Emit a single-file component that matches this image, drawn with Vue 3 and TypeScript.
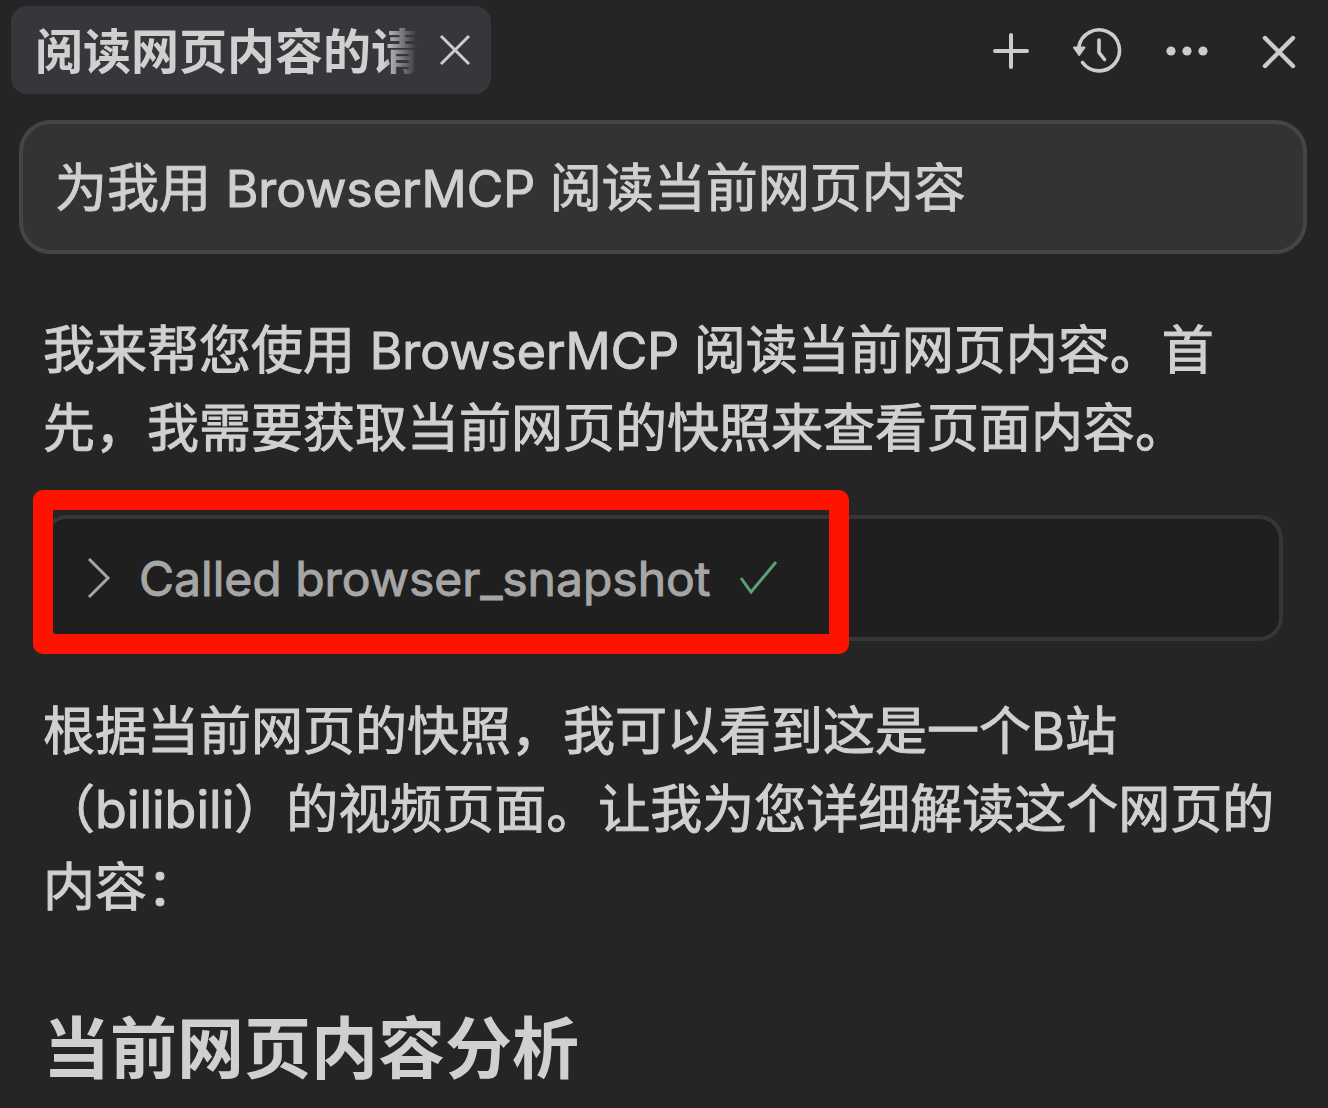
<script setup lang="ts">
import { ref } from 'vue'

const tabTitle = '阅读网页内容的请'
const server = 'BrowserMCP'
const introStart = '我来帮您使用'
const introEnd = '阅读当前网页内容。首先，我需要获取当前网页的快照来查看页面内容。'
const summary = '根据当前网页的快照，我可以看到这是一个B站（bilibili）的视频页面。让我为您详细解读这个网页的内容：'
const heading = '当前网页内容分析'
const expanded = ref(false)
</script>

<template>
  <div class="panel">
    <header class="bar">
      <div class="tab">
        <span class="tab-title">{{ tabTitle }}</span>
        <button class="icon-btn" type="button" aria-label="关闭标签">
          <svg width="32" height="32" viewBox="0 0 32 32">
            <path d="M2 2 30 30M30 2 2 30" stroke-width="3" />
          </svg>
        </button>
      </div>
      <nav class="actions">
        <button class="icon-btn" type="button" aria-label="新建对话">
          <svg width="48" height="48" viewBox="0 0 48 48">
            <path d="M24 8V40M8 24H40" stroke-width="4" stroke-linecap="round" />
          </svg>
        </button>
        <button class="icon-btn" type="button" aria-label="历史记录">
          <svg width="48" height="48" viewBox="4 2 48 48">
            <path d="M7.8 22A20.5 20.5 0 1 1 11.5 37.5" stroke-width="3.6" stroke-linecap="round" />
            <path d="M28 15V27.5L33.5 34.5" stroke-width="3.6" stroke-linecap="round" stroke-linejoin="round" />
            <path class="solid" d="M3 22.5H13.5L8.2 30Z" stroke-width="2" stroke-linejoin="round" />
          </svg>
        </button>
        <button class="icon-btn" type="button" aria-label="更多">
          <svg width="48" height="48" viewBox="0 0 48 48">
            <circle class="dot" cx="8" cy="24" r="4.6" />
            <circle class="dot" cx="24" cy="24" r="4.6" />
            <circle class="dot" cx="40" cy="24" r="4.6" />
          </svg>
        </button>
        <button class="icon-btn close" type="button" aria-label="关闭面板">
          <svg width="48" height="48" viewBox="0 0 48 48">
            <path d="M10 11 38 39M38 11 10 39" stroke-width="4.4" stroke-linecap="round" />
          </svg>
        </button>
      </nav>
    </header>

    <main class="chat">
      <div class="bubble">为我用 <span class="latin">{{ server }}</span> 阅读当前网页内容</div>

      <div class="reply">
        <p>{{ introStart }} <span class="latin">{{ server }}</span> {{ introEnd }}</p>
        <div class="tool">
          <button class="call" type="button" :aria-expanded="expanded" @click="expanded = !expanded">
            <svg class="chevron" width="24" height="40" viewBox="0 0 24 40">
              <path d="M2 1 21 20 2 39" stroke-width="3" />
            </svg>
            <span>Called browser_snapshot</span>
            <svg class="check" width="40" height="36" viewBox="0 0 40 36">
              <path d="M2 18 12 32 37 2" stroke-width="3" />
            </svg>
          </button>
          <span class="marker"></span>
        </div>
        <p>{{ summary }}</p>
        <h2>{{ heading }}</h2>
      </div>
    </main>
  </div>
</template>

<style>
body {
  margin: 0;
  background: #252525;
}
</style>

<style scoped>
.panel {
  min-height: 100vh;
  box-sizing: border-box;
  background: #252525;
  color: #d0d0d0;
  font-family: Inter, "Noto Sans CJK SC", sans-serif;
  font-size: 52px;
  line-height: 78px;
  -webkit-text-stroke: 1px currentColor;
}

svg {
  display: block;
  overflow: visible;
  fill: none;
  stroke: currentColor;
}

.bar {
  display: flex;
  align-items: center;
  justify-content: space-between;
  padding: 6px 25px 0 11px;
}

.tab {
  display: flex;
  align-items: center;
  gap: 20px;
  box-sizing: border-box;
  width: 480px;
  height: 88px;
  padding: 0 20px 0 24px;
  border-radius: 16px;
  background: #37363b;
}

.tab-title {
  flex: 1;
  padding-top: 4px;
  white-space: nowrap;
  font-size: 48px;
  font-weight: 700;
  -webkit-text-stroke: 0;
  mask-image: linear-gradient(to right, #000 calc(100% - 36px), transparent calc(100% - 2px));
}

.icon-btn {
  flex: none;
  padding: 0;
  border: 0;
  background: none;
  color: #cccccc;
  cursor: pointer;
}

.actions {
  display: flex;
  align-items: center;
  gap: 40px;
  padding-top: 2px;
}

.close {
  margin-left: 4px;
}

.solid,
.dot {
  fill: currentColor;
}

.dot {
  stroke: none;
}

.chat {
  padding: 26px 21px 20px 19px;
}

.bubble {
  padding: 26px 32px 22px;
  border: 4px solid #454545;
  border-radius: 32px;
  background: #333333;
}

.latin {
  font-size: 50px;
}

.reply {
  padding: 58px 24px 0;
}

p {
  margin: 0;
}

.tool {
  position: relative;
  margin: 47px 0 52px;
  border: 4px solid #363636;
  border-radius: 24px;
  background: #1f1f1f;
}

.call {
  display: flex;
  align-items: center;
  width: 100%;
  height: 118px;
  padding: 0 40px;
  border: 0;
  background: none;
  color: #a6a6a6;
  font-family: inherit;
  font-size: 48px;
  text-align: left;
  cursor: pointer;
}

.chevron {
  margin-right: 28px;
}

.check {
  margin-left: 28px;
  color: #5b9f75;
}

.marker {
  position: absolute;
  top: -29px;
  left: -14px;
  box-sizing: border-box;
  width: 816px;
  height: 164px;
  border: 20px solid #ff1200;
  border-radius: 10px;
  pointer-events: none;
}

h2 {
  margin: 82px 0 0;
  font-size: 67px;
  font-weight: 700;
  line-height: 80px;
  -webkit-text-stroke: 0;
}
</style>
